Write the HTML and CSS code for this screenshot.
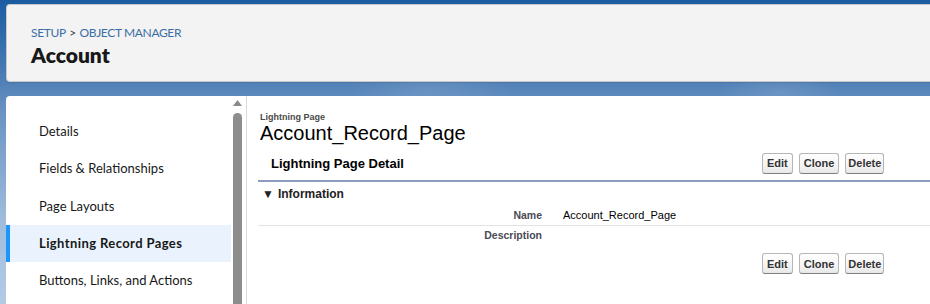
FILE: index.html
```html
<!DOCTYPE html>
<html>
<head>
<meta charset="utf-8">
<link rel="stylesheet" href="styles.css">
</head>
<body>
<div class="page">
  <header class="hdr">
    <div class="crumbs"><span class="crumb">SETUP</span> <span class="sep">&gt;</span> <span class="crumb">OBJECT MANAGER</span></div>
    <h1 class="obj-title">Account</h1>
  </header>
  <div class="panel">
    <aside class="side">
      <nav class="nav">
        <a class="nav-item">Details</a>
        <a class="nav-item">Fields &amp; Relationships</a>
        <a class="nav-item">Page Layouts</a>
        <a class="nav-item active">Lightning Record Pages</a>
        <a class="nav-item">Buttons, Links, and Actions</a>
      </nav>
      <div class="scroll">
        <svg class="arrow" width="9" height="6" viewBox="0 0 9 6"><path d="M4.5 0 L9 6 L0 6 Z" fill="#8a8a8a"/></svg>
        <div class="thumb"></div>
      </div>
    </aside>
    <main class="content">
      <div class="type">Lightning Page</div>
      <div class="rec-title">Account_Record_Page</div>
      <div class="pb-header">
        <div class="pb-title">Lightning Page Detail</div>
        <div class="btns">
          <button class="btn">Edit</button>
          <button class="btn">Clone</button>
          <button class="btn">Delete</button>
        </div>
      </div>
      <div class="section"><span class="tri">&#9660;</span>Information</div>
      <div class="row line">
        <div class="lbl">Name</div>
        <div class="val">Account_Record_Page</div>
      </div>
      <div class="row short">
        <div class="lbl">Description</div>
        <div class="val"></div>
      </div>
      <div class="pb-footer">
        <div class="btns">
          <button class="btn">Edit</button>
          <button class="btn">Clone</button>
          <button class="btn">Delete</button>
        </div>
      </div>
    </main>
  </div>
</div>
</body>
</html>
```

FILE: styles.css
```css
html, body {
  margin: 0;
  padding: 0;
  height: 100%;
  overflow: hidden;
}
body {
  background:
    radial-gradient(ellipse 120px 40px at 430px 90px, rgba(255,255,255,0.10), rgba(255,255,255,0) 70%),
    radial-gradient(ellipse 90px 30px at 780px 92px, rgba(255,255,255,0.10), rgba(255,255,255,0) 70%),
    linear-gradient(180deg, #1b5ca1 0px, #2564a7 20px, #4f7fb6 80px, #6892c3 110px, #9fbcdc 220px, #b4cbe5 304px);
  font-family: Lato, "Liberation Sans", sans-serif;
  color: #181818;
}
.page {
  padding: 4px 0 0 6px;
}
.hdr {
  height: 78px;
  box-sizing: border-box;
  background: #f3f3f3;
  border: 1px solid #c9c9c9;
  border-right: none;
  border-radius: 4px 0 0 4px;
  padding: 21px 0 0 24px;
  box-shadow: 0 1px 1px rgba(0,0,0,0.08);
}
.crumbs {
  font-size: 12px;
  line-height: 14px;
  color: #3b6ea6;
  letter-spacing: -0.35px;
}
.crumbs .sep {
  color: #3e3e3c;
  margin: 0 1px;
}
.obj-title {
  margin: 0;
  font-size: 21px;
  line-height: 30px;
  font-weight: 800;
  color: #181818;
}
.panel {
  margin-top: 14px;
  display: flex;
  background: #fff;
  border-radius: 4px 0 0 0;
  height: 220px;
}
.side {
  display: flex;
  width: 240px;
  border-right: 1px solid #dddbda;
  flex: none;
}
.nav {
  width: 225px;
  padding-top: 16px;
  display: flex;
  flex-direction: column;
}
.nav-item {
  display: flex;
  align-items: center;
  height: 37.5px;
  padding-left: 33px;
  font-size: 13px;
  color: #181818;
  box-sizing: border-box;
}
.nav-item.active {
  background: #eaf3fd;
  font-weight: 700;
  letter-spacing: 0.4px;
  border-left: 4px solid #1b96ff;
  padding-left: 29px;
  height: 37px;
}
.scroll {
  width: 15px;
  display: flex;
  flex-direction: column;
  align-items: center;
  padding-top: 4px;
  box-sizing: border-box;
}
.scroll .arrow {
  display: block;
  margin-left: -3px;
}
.thumb {
  margin-top: 7px;
  margin-left: -3px;
  width: 9px;
  flex: 1;
  background: #8d8d8d;
  border-radius: 4.5px 4.5px 0 0;
}
.content {
  flex: 1;
  padding: 16px 0 0 13px;
  font-family: "Liberation Sans", Arial, sans-serif;
}
.type {
  font-size: 9px;
  line-height: 10px;
  font-weight: 700;
  color: #4a4a4a;
}
.rec-title {
  font-size: 20px;
  line-height: 23px;
  color: #000;
}
.pb-header {
  display: flex;
  align-items: center;
  height: 34px;
  margin-top: 1px;
  margin-left: -2px;
  border-bottom: 2px solid #8e9dbe;
}
.pb-title {
  width: 491px;
  padding-left: 13px;
  font-size: 13px;
  font-weight: 700;
  color: #000;
}
.btns {
  display: flex;
  gap: 6px;
}
.btn {
  font-family: "Liberation Sans", Arial, sans-serif;
  font-size: 11px;
  font-weight: 700;
  color: #333;
  height: 21px;
  padding: 0 4px;
  border: 1px solid #b5b5b5;
  border-bottom-color: #7f7f7f;
  border-radius: 3px;
  background: linear-gradient(180deg, #ffffff 0%, #f4f4f4 60%, #e8e8e8 100%);
  cursor: pointer;
}
.btn:last-child {
  padding: 0 2px;
}
.section {
  height: 23px;
  display: flex;
  align-items: center;
  padding-left: 2px;
  font-size: 12px;
  font-weight: 700;
  color: #222;
}
.tri {
  font-size: 12px;
  margin-right: 4px;
  color: #222;
}
.row {
  display: flex;
  height: 20px;
  align-items: center;
  margin-left: -2px;
}
.row.short {
  height: 18px;
}
.row.line {
  border-bottom: 1px solid #e3e3e3;
}
.lbl {
  width: 284px;
  text-align: right;
  font-size: 10.5px;
  font-weight: 700;
  color: #4a4a56;
}
.val {
  padding-left: 21px;
  font-size: 11px;
  color: #000;
}
.pb-footer {
  display: flex;
  padding-left: 502px;
  margin-top: 9px;
}
```
